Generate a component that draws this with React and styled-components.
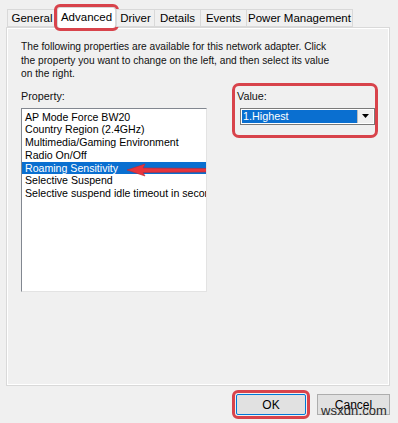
import styled, { createGlobalStyle } from "styled-components";

const GlobalStyle = createGlobalStyle`
  html, body {
    margin: 0;
    padding: 0;
    background: #f0f0f0;
  }
  body {
    font-family: "Liberation Sans", Arial, sans-serif;
    color: #000;
  }
  * {
    box-sizing: border-box;
  }
`;

const RED = "#d8434b";

const properties = [
  "AP Mode Force BW20",
  "Country Region (2.4GHz)",
  "Multimedia/Gaming Environment",
  "Radio On/Off",
  "Roaming Sensitivity",
  "Selective Suspend",
  "Selective suspend idle timeout in seconds",
];

const tabs = [
  { name: "General", w: 50 },
  { name: "Advanced", w: 59 },
  { name: "Driver", w: 39 },
  { name: "Details", w: 47 },
  { name: "Events", w: 47 },
  { name: "Power Management", w: 107 },
];

export default function App() {
  return (
    <>
      <GlobalStyle />
      <Dialog>
        <TabStrip>
          {tabs.map((t) => (
            <Tab key={t.name} w={t.w} active={t.name === "Advanced"}>
              {t.name}
            </Tab>
          ))}
        </TabStrip>
        <Panel>
          <Description>
            The following properties are available for this network adapter. Click
            <br />
            the property you want to change on the left, and then select its value
            <br />
            on the right.
          </Description>
          <Columns>
            <PropertyColumn>
              <Label>Property:</Label>
              <ListBox>
                {properties.map((p) => (
                  <ListItem key={p} selected={p === "Roaming Sensitivity"}>
                    {p}
                  </ListItem>
                ))}
                <Arrow width="80" height="14" viewBox="0 0 80 14">
                  <polygon
                    points="0,7 18,1 16,5 80,5.5 80,9 16,9.5 18,13"
                    fill="#e8353d"
                    stroke="#c02a32"
                    strokeWidth="0.6"
                  />
                </Arrow>
              </ListBox>
            </PropertyColumn>
            <ValueGroup>
              <Label shift>Value:</Label>
              <Select>
                <SelectValue>1.Highest</SelectValue>
                <SelectButton>
                  <svg width="7" height="4" viewBox="0 0 7 4">
                    <polygon points="0,0 7,0 3.5,4" fill="#000" />
                  </svg>
                </SelectButton>
              </Select>
            </ValueGroup>
          </Columns>
        </Panel>
        <ButtonRow>
          <Button primary>OK</Button>
          <Button>Cancel</Button>
          <Watermark>wsxdn.com</Watermark>
        </ButtonRow>
      </Dialog>
    </>
  );
}

const Dialog = styled.div`
  position: relative;
  width: 398px;
  height: 423px;
  padding: 0 8px 0 6px;
  display: flex;
  flex-direction: column;
`;

const TabStrip = styled.div`
  display: flex;
  align-items: flex-end;
  height: 28px;
  padding-left: 2px;
  margin-bottom: -1px;
  position: relative;
  z-index: 1;
`;

const Tab = styled.div`
  width: ${(p) => p.w}px;
  height: ${(p) => (p.active ? "21px" : "18px")};
  padding-top: ${(p) => (p.active ? "2px" : "1px")};
  margin: ${(p) => (p.active ? "0 1px 0 0" : "0 0 1px -1px")};
  text-align: center;
  font-size: 11.5px;
  line-height: 15px;
  white-space: nowrap;
  color: #000;
  background: ${(p) => (p.active ? "#fff" : "#f0f0f0")};
  border: 1px solid #d9d9d9;
  border-bottom: ${(p) => (p.active ? "none" : "1px solid #d9d9d9")};
  outline: ${(p) => (p.active ? `3px solid ${RED}` : "none")};
  outline-offset: 0px;
  border-radius: ${(p) => (p.active ? "3px" : "0")};
`;

const Panel = styled.div`
  height: 359px;
  border: 1px solid #d9d9d9;
  box-shadow: inset 1px 1px 0 #fff, inset -1px -1px 0 #fff;
  padding: 12px 14px 0 14px;
`;

const Description = styled.p`
  margin: 0;
  font-size: 10.2px;
  line-height: 13.5px;
  white-space: nowrap;
  color: #111;
`;

const Columns = styled.div`
  display: flex;
  margin-top: 5px;
`;

const PropertyColumn = styled.div`
  display: flex;
  flex-direction: column;
  width: 186px;
  margin-top: 4px;
`;

const Label = styled.div`
  font-size: 10.8px;
  line-height: 13px;
  color: #111;
  margin-bottom: 5px;
  margin-left: ${(p) => (p.shift ? "-3px" : "0")};
`;

const ListBox = styled.div`
  position: relative;
  height: 184px;
  background: #fff;
  border: 1px solid #828790;
  border-right-color: #e3e3e3;
  border-bottom-color: #e3e3e3;
  padding: 2px 0 0 0;
  overflow: hidden;
`;

const ListItem = styled.div`
  height: 12.8px;
  padding-left: 3px;
  font-size: 10.6px;
  line-height: 12.8px;
  white-space: nowrap;
  color: ${(p) => (p.selected ? "#fff" : "#000")};
  background: ${(p) => (p.selected ? "#0a6fd0" : "transparent")};
`;

const Arrow = styled.svg`
  position: absolute;
  left: 105px;
  top: 54px;
`;

const ValueGroup = styled.div`
  width: 145px;
  height: 49px;
  margin-left: 28px;
  padding: 4px 0 0 5px;
  outline: 3px solid ${RED};
  outline-offset: 0;
  border-radius: 4px;
`;

const Select = styled.div`
  display: flex;
  width: 135px;
  height: 17px;
  margin-top: 1px;
  border: 1px solid #7a7a7a;
  background: #fff;
  padding: 1px;
`;

const SelectValue = styled.div`
  flex: 1;
  background: #0a6fd0;
  color: #fff;
  font-size: 10.8px;
  line-height: 13px;
  padding-left: 1px;
`;

const SelectButton = styled.div`
  width: 16px;
  display: flex;
  align-items: center;
  justify-content: center;
  background: #f0f0f0;
  border-left: 1px solid #bcbcbc;
`;

const ButtonRow = styled.div`
  display: flex;
  justify-content: flex-end;
  gap: 11px;
  padding-top: 8px;
`;

const Button = styled.div`
  width: ${(p) => (p.primary ? "70px" : "73px")};
  height: 21px;
  display: flex;
  align-items: center;
  justify-content: center;
  font-size: 12px;
  color: #000;
  background: #e1e1e1;
  border: 1px solid ${(p) => (p.primary ? "#0078d7" : "#adadad")};
  outline: ${(p) => (p.primary ? `3px solid ${RED}` : "none")};
  outline-offset: 1px;
  border-radius: ${(p) => (p.primary ? "2px" : "0")};
`;

const Watermark = styled.div`
  position: absolute;
  right: 11px;
  bottom: 5px;
  font-size: 13px;
  color: #2a2a2a;
  letter-spacing: 0.1px;
`;
